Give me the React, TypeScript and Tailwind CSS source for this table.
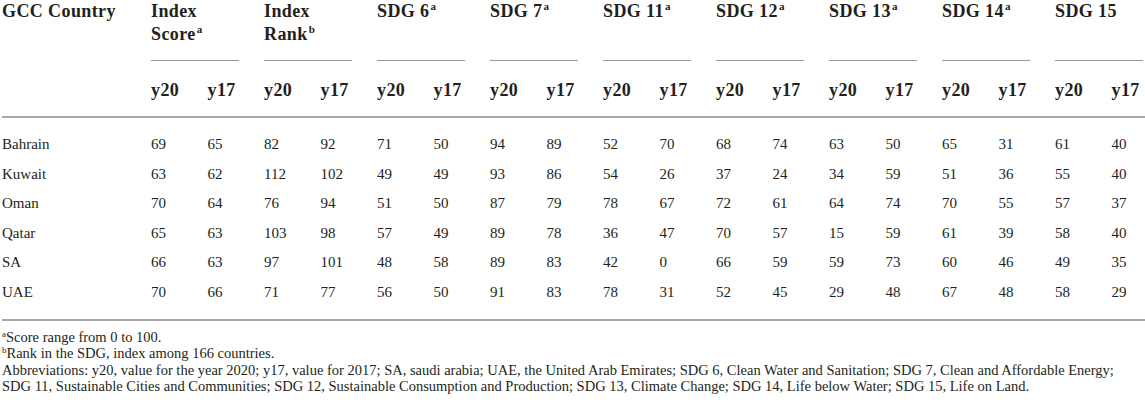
const groups = [
  { label: "Index", label2: "Score", sup: "a" },
  { label: "Index", label2: "Rank", sup: "b" },
  { label: "SDG 6", sup: "a" },
  { label: "SDG 7", sup: "a" },
  { label: "SDG 11", sup: "a" },
  { label: "SDG 12", sup: "a" },
  { label: "SDG 13", sup: "a" },
  { label: "SDG 14", sup: "a" },
  { label: "SDG 15" },
]

const rows: [string, number[]][] = [
  ["Bahrain", [69, 65, 82, 92, 71, 50, 94, 89, 52, 70, 68, 74, 63, 50, 65, 31, 61, 40]],
  ["Kuwait", [63, 62, 112, 102, 49, 49, 93, 86, 54, 26, 37, 24, 34, 59, 51, 36, 55, 40]],
  ["Oman", [70, 64, 76, 94, 51, 50, 87, 79, 78, 67, 72, 61, 64, 74, 70, 55, 57, 37]],
  ["Qatar", [65, 63, 103, 98, 57, 49, 89, 78, 36, 47, 70, 57, 15, 59, 61, 39, 58, 40]],
  ["SA", [66, 63, 97, 101, 48, 58, 89, 83, 42, 0, 66, 59, 59, 73, 60, 46, 49, 35]],
  ["UAE", [70, 66, 71, 77, 56, 50, 91, 83, 78, 31, 52, 45, 29, 48, 67, 48, 58, 29]],
]

export default function App() {
  return (
    <div className="w-[1145px] h-[409px] bg-white text-[#231f20] font-['Liberation_Serif',serif] overflow-hidden pl-[2px]">
      <table className="table-fixed border-collapse w-[1143px]">
        <colgroup>
          <col className="w-[149px]" />
          {Array.from({ length: 17 }).map((_, i) => (
            <col key={i} className="w-[56.5px]" />
          ))}
          <col />
        </colgroup>
        <thead>
          <tr>
            <th rowSpan={2} className="align-top text-left font-bold text-[18px] tracking-[0.4px] leading-[23px] p-0 border-b-2 border-[#a8a8a8]">
              GCC Country
            </th>
            {groups.map((g, i) => (
              <th key={i} colSpan={2} className="align-top text-left font-bold text-[18px] tracking-[0.4px] leading-[23px] p-0">
                <div className="h-[60px] whitespace-nowrap">
                  {g.label}
                  {g.label2 && <br />}
                  {g.label2}
                  {g.sup && <sup className="text-[11px] top-[-7px] ml-[1px]">{g.sup}</sup>}
                </div>
                <div className="w-[88px] border-t border-[#9a9a9a]" />
              </th>
            ))}
          </tr>
          <tr>
            {groups.map((_, i) => (
              <>
                <th key={`a${i}`} className="text-left font-bold text-[18px] tracking-[0.4px] leading-[23px] p-0 pt-[18px] pb-[14px] border-b-2 border-[#a8a8a8]">
                  y20
                </th>
                <th key={`b${i}`} className="text-left font-bold text-[18px] tracking-[0.4px] leading-[23px] p-0 pt-[18px] pb-[14px] border-b-2 border-[#a8a8a8]">
                  y17
                </th>
              </>
            ))}
          </tr>
        </thead>
        <tbody className="text-[15px] leading-[29.6px]">
          <tr>
            <td colSpan={19} className="h-[13px] p-0" />
          </tr>
          {rows.map(([name, vals]) => (
            <tr key={name}>
              <td className="p-0">{name}</td>
              {vals.map((v, j) => (
                <td key={j} className="p-0">{v}</td>
              ))}
            </tr>
          ))}
          <tr>
            <td colSpan={19} className="h-[12px] p-0 border-b-2 border-[#a8a8a8]" />
          </tr>
        </tbody>
      </table>
      <div className="text-[14.5px] leading-[16.5px] pt-[8px]">
        <p>
          <sup className="text-[9px] top-[-5px]">a</sup>Score range from 0 to 100.
        </p>
        <p>
          <sup className="text-[9px] top-[-5px]">b</sup>Rank in the SDG, index among 166 countries.
        </p>
        <p className="whitespace-nowrap">
          Abbreviations: y20, value for the year 2020; y17, value for 2017; SA, saudi arabia; UAE, the United Arab Emirates; SDG 6, Clean Water and Sanitation; SDG 7, Clean and Affordable Energy;
        </p>
        <p className="whitespace-nowrap">
          SDG 11, Sustainable Cities and Communities; SDG 12, Sustainable Consumption and Production; SDG 13, Climate Change; SDG 14, Life below Water; SDG 15, Life on Land.
        </p>
      </div>
    </div>
  )
}
